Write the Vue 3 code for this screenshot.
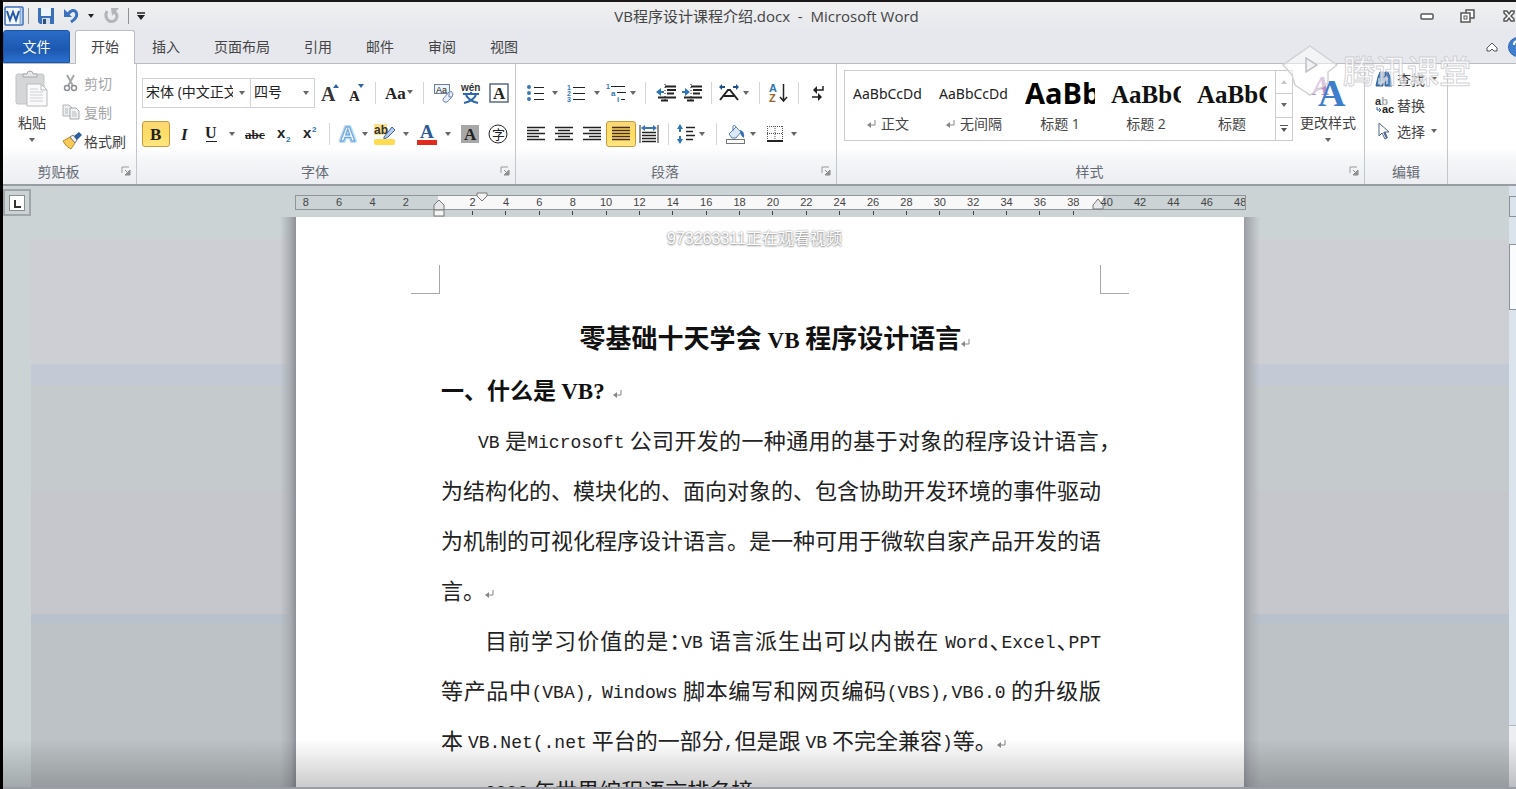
<script setup>
const svg = (w, h, body) =>
  `<svg width="${w}" height="${h}" viewBox="0 0 ${w} ${h}" fill="none" aria-hidden="true">${body}</svg>`

const serif = 'font-family="Liberation Serif, serif" font-weight="bold"'
const sans = 'font-family="Liberation Sans, sans-serif" font-weight="bold"'

const icons = {
  arrow: svg(6, 4, '<path d="M0 0H6L3 4Z" fill="#666"/>'),
  growFont: svg(20, 22, `<text x="1" y="19" font-size="20" ${serif} fill="#333">A</text><path d="M13 6L16 2L19 6Z" fill="#2e62a6"/>`),
  shrinkFont: svg(20, 22, `<text x="3" y="19" font-size="15" ${serif} fill="#222">A</text><path d="M12 2H18L15 6Z" fill="#2e62a6"/>`),
  changeCase: svg(28, 20, `<text x="0" y="16" font-size="17" ${serif} fill="#222">Aa</text><path d="M22 7H28L25 11Z" fill="#666"/>`),
  clearFormat: svg(22, 22, '<rect x="1.500" y="2.500" width="15" height="9" fill="#eef4fb" stroke="#6b7f98"/><text x="3" y="11" font-size="9" font-family="Liberation Sans, sans-serif" fill="#222">Aa</text><path d="M10 17L16 10Q19 8 20 12L19 15L14 20Q10 21 10 17Z" fill="#e8eefb" stroke="#6f86b5"/><path d="M16 10L16 15L19 15" stroke="#6f86b5"/>'),
  phonetic: svg(22, 22, `<text x="1" y="9" font-size="10" ${sans} fill="#333">wén</text><path d="M3 12H19M11 10V12M6 13Q9 19 18 21M16 13Q13 19 4 21" stroke="#2d68ad" stroke-width="2"/>`),
  charBorder: svg(20, 20, `<rect x="1" y="1" width="18" height="18" fill="#fff" stroke="#5a6b82" stroke-width="1.500"/><text x="4" y="16" font-size="17" ${serif} fill="#222">A</text>`),
  bold: svg(16, 20, `<text x="2" y="16" font-size="17" ${serif} fill="#222">B</text>`),
  italic: svg(16, 20, `<text x="5" y="16" font-size="17" ${serif} font-style="italic" fill="#222">I</text>`),
  underline: svg(16, 20, `<text x="2" y="14" font-size="16" ${serif} fill="#222">U</text><path d="M3 17.500H14" stroke="#222"/>`),
  strike: svg(20, 16, `<text x="0" y="13" font-size="13" ${serif} fill="#222">abc</text><path d="M0 9.500H20" stroke="#222"/>`),
  sub: svg(16, 20, `<text x="1" y="14" font-size="15" ${sans} fill="#222">x</text><text x="10" y="18" font-size="8" ${sans} fill="#2e75b6">2</text>`),
  sup: svg(16, 20, `<text x="1" y="14" font-size="15" ${sans} fill="#222">x</text><text x="10" y="8" font-size="8" ${sans} fill="#2e75b6">2</text>`),
  textEffect: svg(22, 22, `<text x="3" y="18" font-size="21" ${sans} fill="#fff" stroke="#b8dcf5" stroke-width="4" stroke-linejoin="round">A</text><text x="3" y="18" font-size="21" ${sans} fill="#fff" stroke="#5a9bd4" stroke-width="1">A</text>`),
  highlight: svg(22, 22, `<rect x="0" y="1" width="13" height="11" fill="#fde08a"/><text x="0" y="11" font-size="12" ${sans} fill="#333">ab</text><path d="M10 14L18 4L21 7L14 14L10 16Z" fill="#b9cdea" stroke="#3a64a5"/><rect x="0" y="16" width="21" height="6" rx="2" fill="#fddc4f"/>`),
  fontColor: svg(20, 22, `<text x="3" y="15" font-size="19" ${serif} fill="#2c5896">A</text><rect x="0" y="17" width="20" height="5" fill="#e02b1d"/>`),
  charShade: svg(18, 18, `<rect width="18" height="18" fill="#a8a8a8"/><text x="3" y="15" font-size="17" ${serif} fill="#222">A</text>`),
  enclose: svg(20, 20, '<circle cx="10" cy="10" r="9" stroke="#222"/><text x="4" y="15" font-size="13" font-family="Noto Sans CJK SC, sans-serif" fill="#222">字</text>'),
  bullets: svg(18, 18, '<circle cx="2" cy="3" r="2" fill="#3c78b8"/><circle cx="2" cy="9" r="2" fill="#3c78b8"/><circle cx="2" cy="15" r="2" fill="#3c78b8"/><path d="M7 3.500H17M7 9.500H17M7 15.500H17" stroke="#222"/>'),
  numbers: svg(18, 18, `<text x="0" y="6" font-size="7" ${sans} fill="#2e75b6">1</text><text x="0" y="12" font-size="7" ${sans} fill="#2e75b6">2</text><text x="0" y="18" font-size="7" ${sans} fill="#2e75b6">3</text><path d="M6 3.500H18M6 9.500H18M6 15.500H18" stroke="#222"/>`),
  multilevel: svg(20, 20, `<text x="0" y="6" font-size="7" ${sans} fill="#2e75b6">1</text><text x="5" y="13" font-size="8" ${sans} fill="#2e75b6">a</text><text x="11" y="19" font-size="8" ${sans} fill="#2e75b6">i</text><path d="M5 3.500H19M11 9.500H20M15 16.500H19" stroke="#222"/>`),
  outdent: svg(20, 18, '<path d="M9 2.500H20M11 6H20M11 9.500H18M2 13.500H20M5 16.500H12" stroke="#222" stroke-width="2"/><path d="M9 0V18" stroke="#222" stroke-dasharray="1 2"/><path d="M0 8L5 4V7H8V9H5V12Z" fill="#2e75b6"/>'),
  indent: svg(20, 18, '<path d="M9 2.500H20M11 6H20M11 9.500H18M2 13.500H20M5 16.500H12" stroke="#222" stroke-width="2"/><path d="M9 0V18" stroke="#222" stroke-dasharray="1 2"/><path d="M8 8L3 4V7H0V9H3V12Z" fill="#2e75b6"/>'),
  asian: svg(20, 18, '<path d="M1 16L9 6H11L19 16M5 12H15" stroke="#222" stroke-width="2"/><path d="M0 3L3 0V2H6V4H3V6ZM20 3L17 0V2H14V4H17V6Z" fill="#1f4e8c"/>'),
  sort: svg(18, 20, `<text x="0" y="9" font-size="11" ${sans} fill="#2e75b6">A</text><text x="0" y="19" font-size="11" ${sans} fill="#9a6427">Z</text><path d="M14.500 1V18M11 14L14.500 18L18 14" stroke="#222" stroke-width="1.500"/>`),
  marks: svg(14, 18, '<path d="M12 2V6H5" stroke="#222" stroke-width="1.500"/><path d="M2 6L6 2V10ZM11 13L7 9V17Z" fill="#222"/><path d="M1 13H8" stroke="#222" stroke-width="1.500"/>'),
  alignLeft: svg(18, 16, '<path d="M0 1.500H18M0 4.500H12M0 7.500H18M0 10.500H12M0 13.500H18" stroke="#222" stroke-width="1.500"/>'),
  alignCenter: svg(18, 16, '<path d="M0 1.500H18M3 4.500H15M0 7.500H18M3 10.500H15M0 13.500H18" stroke="#222" stroke-width="1.500"/>'),
  alignRight: svg(18, 16, '<path d="M0 1.500H18M6 4.500H18M0 7.500H18M6 10.500H18M0 13.500H18" stroke="#222" stroke-width="1.500"/>'),
  justify: svg(18, 16, '<path d="M0 1.500H18M0 4.500H18M0 7.500H18M0 10.500H18M0 13.500H18" stroke="#4a2b18" stroke-width="1.500"/>'),
  distribute: svg(20, 20, '<path d="M1 1V19M19 1V19" stroke="#222"/><path d="M3 8.500H17M3 11.500H17M3 14.500H17M3 17.500H17" stroke="#222" stroke-width="1.500"/><path d="M2 4L6 1V3H14V1L18 4L14 7V5H6V7Z" fill="#3775ba"/>'),
  lineSpacing: svg(18, 20, '<path d="M3 0L6 5H4V8H2V5H0ZM3 20L6 15H4V12H2V15H0Z" fill="#2e75b6"/><path d="M9 3.500H18M9 7.500H16M9 11.500H18M9 15.500H16" stroke="#222" stroke-width="1.500"/>'),
  shading: svg(22, 20, '<path d="M4 10L11 3L16 8L11 14H7Z" fill="#dbe8f6" stroke="#5b7fae"/><path d="M8 7V2Q10 0 11 3" stroke="#5b7fae"/><path d="M15 6Q20 7 19 14Q16 12 15 9Z" fill="#3571b4"/><rect x="1.500" y="15.500" width="18" height="4" fill="#fff" stroke="#777"/>'),
  borders: svg(16, 18, '<path d="M.5 1V16M8 1V16M15.500 1V16M0 1.500H16M0 8.500H16" stroke="#555" stroke-dasharray="1 1"/><path d="M0 16H16" stroke="#222" stroke-width="2"/>'),
  paste: svg(34, 38, '<rect x="1" y="4" width="28" height="30" rx="2" fill="#d4d6d8" stroke="#c0c3c5"/><path d="M8 7V4H12Q12 1 15 1Q18 1 18 4H22V7Z" fill="#e6e8e9" stroke="#a5a9ac"/><path d="M12 14H26L32 20V36H12Z" fill="#fafafa" stroke="#b8bbbe"/><path d="M26 14V20H32" stroke="#b8bbbe"/><path d="M15 19H23M15 22H28M15 25H28M15 28H28M15 31H28" stroke="#cdd0d3"/>'),
  cut: svg(18, 18, '<path d="M5 1L11 12M12 1L6 12" stroke="#a5a8ab" stroke-width="2"/><circle cx="5" cy="14" r="2.500" stroke="#8c9094" stroke-width="1.500"/><circle cx="12" cy="14" r="2.500" stroke="#8c9094" stroke-width="1.500"/>'),
  copy: svg(18, 18, '<path d="M1 2H7L10 5V13H1Z" fill="#eceeef" stroke="#b0b4b7"/><path d="M8 5H14L17 8V16H8Z" fill="#f2f3f4" stroke="#a3a8ab"/><path d="M10 9H14M10 11H15M10 13H15M3 6H6M3 8H6M3 10H6" stroke="#b6babd"/>'),
  painter: svg(20, 18, '<path d="M1 9L8 5L13 11L9 17Q4 15 1 9Z" fill="#f6cb5a" stroke="#b98a26"/><path d="M8 5L11 3L15 8L13 11Z" fill="#f3f3f3" stroke="#777"/><path d="M12 4L17 0L20 3L15 8Z" fill="#2d5f9e"/>'),
  styles: svg(36, 38, `<text x="2" y="25" font-size="27" ${serif} font-style="italic" fill="#b98fc4">A</text><text x="8" y="36" font-size="38" ${serif} fill="#3f7ecb">A</text>`),
  find: svg(18, 18, '<path d="M1 16L3 7L5 2H8V16ZM17 16L15 7L13 2H10V16Z" fill="#4f80ba" stroke="#2c5b94"/><path d="M7 6H11V11H7Z" fill="#2c5b94"/><path d="M4 8V14M12 8V14" stroke="#c3d7ec" stroke-width="1.500"/>'),
  replace: svg(20, 18, `<text x="0" y="9" font-size="11" ${sans} fill="#333">a<tspan fill="#aaa">b</tspan></text><text x="7" y="17" font-size="11" ${sans} fill="#222">ac</text><path d="M2 11V14H6M4 12L6 14L4 16" stroke="#2e62a6"/>`),
  select: svg(18, 18, '<path d="M4 1V14L7 11L10 17L12 16L10 10H14Z" fill="#fff" stroke="#50698c"/><path d="M9 10L12 16" stroke="#50698c" stroke-width="2"/>'),
  launcher: svg(10, 10, '<path d="M1 7V1H8" stroke="#999"/><path d="M4 4L8 8M9 4V9H4Z" stroke="#888" fill="#999"/>'),
  returnMark: svg(9, 9, '<path d="M8 0V5H1" stroke="#888"/><path d="M0 5L4 2V8Z" fill="#888"/>'),
}

const tabs = ['开始', '插入', '页面布局', '引用', '邮件', '审阅', '视图']

const t = (icon, w, label, on = false) => ({ icon, w, label, on })
const sep = (w) => ({ sep: true, w })

const fontRow1 = [
  t('growFont', 29, '增大字体'), t('shrinkFont', 24, '缩小字体'), sep(14),
  t('changeCase', 34, '更改大小写'), sep(14),
  t('clearFormat', 27, '清除格式'), t('phonetic', 28, '拼音指南'), t('charBorder', 27, '字符边框'),
]
const fontRow2 = [
  t('bold', 28, '加粗', true), t('italic', 27, '倾斜'), t('underline', 28, '下划线'), t('arrow', 14, '下划线选项'),
  t('strike', 32, '删除线'), t('sub', 26, '下标'), t('sup', 26, '上标'), sep(12),
  t('textEffect', 26, '文本效果'), t('arrow', 8, '文本效果选项'),
  t('highlight', 32, '突出显示'), t('arrow', 10, '突出显示选项'),
  t('fontColor', 32, '字体颜色'), t('arrow', 10, '字体颜色选项'),
  t('charShade', 34, '字符底纹'), t('enclose', 22, '带圈字符'),
]
const paraRow1 = [
  t('bullets', 28, '项目符号'), t('arrow', 10, '项目符号选项'),
  t('numbers', 32, '编号'), t('arrow', 10, '编号选项'),
  t('multilevel', 28, '多级列表'), t('arrow', 6, '多级列表选项'), sep(18),
  t('outdent', 24, '减少缩进量'), t('indent', 28, '增加缩进量'), sep(10),
  t('asian', 26, '中文版式'), t('arrow', 8, '中文版式选项'), sep(18),
  t('sort', 20, '排序'), sep(20), t('marks', 20, '显示编辑标记'),
]
const paraRow2 = [
  t('alignLeft', 28, '左对齐'), t('alignCenter', 28, '居中'), t('alignRight', 28, '右对齐'),
  t('justify', 30, '两端对齐', true), t('distribute', 26, '分散对齐'), sep(12),
  t('lineSpacing', 24, '行距'), t('arrow', 8, '行距选项'), sep(20),
  t('shading', 20, '底纹'), t('arrow', 14, '底纹选项'),
  t('borders', 30, '边框'), t('arrow', 8, '边框选项'),
]

const styleItems = [
  { sample: 'AaBbCcDd', name: '正文', kind: 'plain', mark: true },
  { sample: 'AaBbCcDd', name: '无间隔', kind: 'plain', mark: true },
  { sample: 'AaBb', name: '标题 1', kind: 'h1' },
  { sample: 'AaBbC', name: '标题 2', kind: 'h2' },
  { sample: 'AaBbC', name: '标题', kind: 'h2' },
]

const ruler = Array.from({ length: 29 }, (_, i) => {
  const n = (i - 4) * 2
  return { label: n === 0 ? '' : String(Math.abs(n)), tick: n > 0 && n < 40 }
})

const runs = (text) =>
  text
    .split(/([A-Za-z0-9().,]+)/)
    .filter(Boolean)
    .map((s) => ({ s, latin: /^[A-Za-z0-9().,]/.test(s) }))

const lines = [
  { text: 'VB 是Microsoft 公司开发的一种通用的基于对象的程序设计语言，', cls: 'full hang tight' },
  { text: '为结构化的、模块化的、面向对象的、包含协助开发环境的事件驱动', cls: 'full' },
  { text: '为机制的可视化程序设计语言。是一种可用于微软自家产品开发的语', cls: 'full' },
  { text: '言。', cls: '', mark: true },
  { text: '目前学习价值的是：VB 语言派生出可以内嵌在 Word、Excel、PPT', cls: 'full first tight' },
  { text: '等产品中(VBA), Windows 脚本编写和网页编码(VBS),VB6.0 的升级版', cls: 'full' },
  { text: '本 VB.Net(.net 平台的一部分,但是跟 VB 不完全兼容)等。', cls: '', mark: true },
  { text: '2009 年世界编程语言排名榜', cls: 'first' },
].map((l) => ({ ...l, runs: runs(l.text) }))
</script>

<template>
  <div class="window">
    <header class="titlebar">
      <div class="quick">
        <svg class="logo" width="20" height="20" viewBox="0 0 20 20" aria-hidden="true">
          <rect x="1" y="1" width="18" height="18" rx="1" fill="#f4f8fd" stroke="#3b6cb4" stroke-width="1.500" />
          <path d="M16.500 2V18" stroke="#8caedb" stroke-width="2" />
          <path d="M3 5L6 14L9 6L12 14L15 5" fill="none" stroke="#2359ab" stroke-width="2" />
        </svg>
        <i class="bar"></i>
        <button aria-label="保存">
          <svg width="18" height="18" viewBox="0 0 18 18"><path d="M1 1H17V17H3L1 15Z" fill="#3b6fb8" /><rect x="4" y="1" width="10" height="8" fill="#eef4fb" /><rect x="5" y="11" width="8" height="6" fill="#d4dfee" /><rect x="6" y="12" width="3" height="5" fill="#2c4f83" /></svg>
        </button>
        <button class="undo" aria-label="撤消">
          <svg width="16" height="16" viewBox="0 0 16 16"><path d="M4 6Q9 0 12 4Q15 9 7 14" fill="none" stroke="#3a72c0" stroke-width="3" /><path d="M0 1V9H8Z" fill="#3a72c0" /></svg>
        </button>
        <button aria-label="撤消选项"><svg width="6" height="4" viewBox="0 0 6 4"><path d="M0 0H6L3 4Z" fill="#222" /></svg></button>
        <button class="redo" aria-label="重复">
          <svg width="16" height="16" viewBox="0 0 16 16"><path d="M3 3Q0 9 5 13Q11 15 13 9Q13 5 10 4" fill="none" stroke="#b3b5b8" stroke-width="3" /><path d="M7 0H15L8 8Z" fill="#b3b5b8" /></svg>
        </button>
        <i class="bar"></i>
        <button aria-label="自定义快速访问工具栏"><svg width="8" height="8" viewBox="0 0 8 8"><path d="M0 1H8" stroke="#222" stroke-width="1.500" /><path d="M0 3H8L4 8Z" fill="#222" /></svg></button>
      </div>
      <h1 class="caption">VB程序设计课程介绍.docx&nbsp; -&nbsp; Microsoft Word</h1>
      <div class="sysbuttons">
        <button aria-label="最小化"><svg width="14" height="14" viewBox="0 0 14 14"><rect x="1" y="5" width="12" height="5" rx="1" fill="#fff" stroke="#555" stroke-width="1.500" /></svg></button>
        <button aria-label="还原"><svg width="16" height="14" viewBox="0 0 16 14"><rect x="6" y="1" width="8" height="8" fill="#fff" stroke="#555" stroke-width="1.500" /><rect x="1" y="4" width="9" height="9" fill="#fff" stroke="#555" stroke-width="1.500" /><rect x="4" y="7" width="3" height="3" fill="none" stroke="#555" /></svg></button>
        <button aria-label="关闭"><svg width="14" height="12" viewBox="0 0 14 12"><path d="M2 1H5L7 4L9 1H12V3L9 6L12 9V11H9L7 8L5 11H2V9L5 6L2 3Z" fill="#fff" stroke="#555" stroke-width="1.500" /></svg></button>
      </div>
    </header>

    <nav class="tabs">
      <button class="file">文件</button>
      <button v-for="(tab, i) in tabs" :key="tab" class="tab" :class="{ active: i === 0 }">{{ tab }}</button>
      <div class="help">
        <button aria-label="功能区最小化"><svg width="12" height="10" viewBox="0 0 12 10"><path d="M1 6L6 1L11 6V9H8L6 7L4 9H1Z" fill="#fff" stroke="#555" /></svg></button>
        <button aria-label="帮助"><svg width="20" height="20" viewBox="0 0 20 20"><circle cx="10" cy="10" r="9.500" fill="#3f7fd0" stroke="#2c62ab" /><path d="M6 8Q6 4 10 4Q14 4 14 8Q14 10 10 11V13" fill="none" stroke="#fff" stroke-width="2" /></svg></button>
      </div>
    </nav>

    <section class="ribbon">
      <div class="group clipboard">
        <div class="body">
          <button class="big" disabled>
            <span v-html="icons.paste"></span>
            <span class="dark">粘贴</span>
            <span v-html="icons.arrow"></span>
          </button>
          <div class="stack">
            <button disabled><span class="ic" v-html="icons.cut"></span>剪切</button>
            <button disabled><span class="ic" v-html="icons.copy"></span>复制</button>
            <button><span class="ic" v-html="icons.painter"></span>格式刷</button>
          </div>
        </div>
        <footer><span>剪贴板</span><button aria-label="剪贴板选项" v-html="icons.launcher"></button></footer>
      </div>

      <div class="group font">
        <div class="body rows">
          <div class="row">
            <label class="combo family"><select aria-label="字体"><option>宋体 (中文正文)</option></select><span v-html="icons.arrow"></span></label>
            <label class="combo size"><select aria-label="字号"><option>四号</option></select><span v-html="icons.arrow"></span></label>
            <template v-for="(b, i) in fontRow1" :key="i">
              <i v-if="b.sep" class="sep" :style="{ width: b.w + 'px' }"></i>
              <button v-else class="tool" :aria-label="b.label" :style="{ width: b.w + 'px' }" v-html="icons[b.icon]"></button>
            </template>
          </div>
          <div class="row">
            <template v-for="(b, i) in fontRow2" :key="i">
              <i v-if="b.sep" class="sep" :style="{ width: b.w + 'px' }"></i>
              <button v-else class="tool" :class="{ on: b.on }" :aria-label="b.label" :style="{ width: b.w + 'px' }" v-html="icons[b.icon]"></button>
            </template>
          </div>
        </div>
        <footer><span>字体</span><button aria-label="字体选项" v-html="icons.launcher"></button></footer>
      </div>

      <div class="group paragraph">
        <div class="body rows">
          <div v-for="(row, r) in [paraRow1, paraRow2]" :key="r" class="row">
            <template v-for="(b, i) in row" :key="i">
              <i v-if="b.sep" class="sep" :style="{ width: b.w + 'px' }"></i>
              <button v-else class="tool" :class="{ on: b.on }" :aria-label="b.label" :style="{ width: b.w + 'px' }" v-html="icons[b.icon]"></button>
            </template>
          </div>
        </div>
        <footer><span>段落</span><button aria-label="段落选项" v-html="icons.launcher"></button></footer>
      </div>

      <div class="group styles">
        <div class="body">
          <div class="gallery">
            <button v-for="(s, i) in styleItems" :key="i" class="style">
              <span class="sample" :class="s.kind">{{ s.sample }}</span>
              <span class="name"><span v-if="s.mark" v-html="icons.returnMark"></span>{{ s.name }}</span>
            </button>
            <div class="scroller">
              <button aria-label="上一行"><svg width="6" height="4" viewBox="0 0 6 4"><path d="M0 4H6L3 0Z" fill="#c4c6c8" /></svg></button>
              <button aria-label="下一行" v-html="icons.arrow"></button>
              <button aria-label="其他"><svg width="8" height="8" viewBox="0 0 8 8"><path d="M0 .5H8" stroke="#555" /><path d="M1 3H7L4 7Z" fill="#555" /></svg></button>
            </div>
          </div>
          <button class="big change">
            <span v-html="icons.styles"></span>
            <span class="dark">更改样式</span>
            <span v-html="icons.arrow"></span>
          </button>
        </div>
        <footer><span>样式</span><button aria-label="样式选项" v-html="icons.launcher"></button></footer>
      </div>

      <div class="group edit">
        <div class="body stack">
          <button><span class="ic" v-html="icons.find"></span>查找<span class="drop" v-html="icons.arrow"></span></button>
          <button><span class="ic" v-html="icons.replace"></span>替换</button>
          <button><span class="ic" v-html="icons.select"></span>选择<span class="drop" v-html="icons.arrow"></span></button>
        </div>
        <footer><span>编辑</span></footer>
      </div>
    </section>

    <main class="workspace">
      <div class="gutter">
        <button class="tabstop" aria-label="制表符"><svg width="16" height="16" viewBox="0 0 16 16"><rect x=".5" y=".5" width="15" height="15" fill="#fff" stroke="#8a8f94" /><path d="M6 5V12H12" fill="none" stroke="#333" stroke-width="2" /></svg></button>
      </div>

      <div class="desk">
        <div class="rulerrow">
          <div class="ruler">
            <svg class="marker right-in" width="12" height="12" viewBox="0 0 12 12"><path d="M1 11V7L6 1L11 7V11Z" fill="#e6e8ea" stroke="#777" /></svg>
            <div class="scale">
              <span v-for="(n, i) in ruler" :key="i" :class="{ tick: n.tick }">{{ n.label }}</span>
            </div>
            <svg class="marker first-line" width="12" height="10" viewBox="0 0 12 10"><path d="M1 1H11V4L6 9L1 4Z" fill="#f4f4f4" stroke="#777" /></svg>
            <svg class="marker hanging" width="12" height="18" viewBox="0 0 12 18"><path d="M1 11V6L6 1L11 6V11Z" fill="#e6e8ea" stroke="#777" /><rect x="1" y="11" width="10" height="6" fill="#f4f4f4" stroke="#777" /></svg>
          </div>
        </div>

        <div class="canvas">
          <article class="page">
            <div class="corners"><i class="corner left"></i><i class="corner right"></i></div>
            <div class="text">
              <h2 class="title">零基础十天学会 <b>VB</b> 程序设计语言<span class="ret" v-html="icons.returnMark"></span></h2>
              <h3 class="heading">一、什么是 <b>VB?</b><span class="ret wide" v-html="icons.returnMark"></span></h3>
              <p v-for="(l, i) in lines" :key="i" class="line" :class="l.cls"><span v-for="(r, j) in l.runs" :key="j" :class="{ latin: r.latin }">{{ r.s }}</span><span v-if="l.mark" class="ret" v-html="icons.returnMark"></span></p>
            </div>
            <div class="viewer">973263311正在观看视频</div>
          </article>
        </div>
      </div>

      <div class="scrollbar">
        <div class="split"></div>
        <div class="up"></div>
        <div class="thumb"></div>
        <div class="track"></div>
        <div class="browse"></div>
      </div>
      <div class="shade"></div>
    </main>

    <div class="watermark">
      <svg width="56" height="52" viewBox="0 0 56 52" aria-hidden="true">
        <path d="M28 1L55 20L46 27V38L28 50L13 40L10 30L1 20Z" fill="#fff" fill-opacity=".5" stroke="#d2d2d6" stroke-width="1.500" />
        <path d="M24 13L35 20L24 27Z" fill="#f2f2f4" stroke="#bfc1c6" stroke-width="1.500" />
      </svg>
      <span>腾讯课堂</span>
    </div>
  </div>
</template>

<style>
body {
  margin: 0;
  overflow: hidden;
}
</style>

<style scoped>
.window {
  position: relative;
  box-sizing: border-box;
  height: 100vh;
  display: flex;
  flex-direction: column;
  overflow: hidden;
  border-top: 2px solid #1b1919;
  border-left: 3px solid #000;
  background: #e6e8ed;
  font-family: "Open Sans", "Noto Sans CJK SC", sans-serif;
  font-size: 14px;
  color: #444;
}
.window :deep(svg) {
  display: block;
  flex: none;
  overflow: visible;
}
button {
  display: flex;
  align-items: center;
  justify-content: center;
  padding: 0;
  border: 0;
  background: none;
  font: inherit;
  color: inherit;
  white-space: nowrap;
}
i {
  display: block;
  flex: none;
}

/* title bar */
.titlebar {
  flex: none;
  display: grid;
  grid-template-columns: 1fr auto 1fr;
  align-items: center;
  height: 28px;
  background: linear-gradient(#f0f0f0, #e6e8ed);
}
.quick {
  display: flex;
  align-items: center;
  gap: 8px;
  padding-left: 1px;
}
.quick .bar {
  width: 1px;
  height: 16px;
  margin-left: -4px;
  background: #8e9196;
}
.undo {
  margin-left: 1px;
}
.redo {
  margin-left: 2px;
  margin-right: 4px;
}
.caption {
  margin: 0;
  padding-left: 14px;
  font-size: 15px;
  font-weight: 400;
  line-height: 24px;
}
.sysbuttons {
  display: flex;
  justify-content: flex-end;
  gap: 26px;
}

/* tabs */
.tabs {
  flex: none;
  display: flex;
  align-items: flex-end;
  height: 34px;
  box-sizing: border-box;
  border-bottom: 1px solid #b9bcc1;
}
.file {
  width: 67px;
  height: 33px;
  margin-right: 5px;
  padding-bottom: 2px;
  border: 1px solid #1a56a8;
  border-radius: 3px 3px 0 0;
  background: linear-gradient(#2a6cc8, #1c58b0 60%, #2b71cf);
  color: #fff;
}
.tab {
  height: 33px;
  padding: 0 17px 2px;
}
.tab.active {
  height: 34px;
  padding: 0 15px 4px;
  margin: 0 0 -1px;
  border: 1px solid #b9bcc1;
  border-bottom: 0;
  border-radius: 3px 3px 0 0;
  background: #fff;
}
.help {
  display: flex;
  align-items: center;
  gap: 10px;
  height: 33px;
  margin-left: auto;
  margin-right: -12px;
}

/* ribbon */
.ribbon {
  flex: none;
  display: flex;
  height: 120px;
  background: linear-gradient(#fff 70%, #f5f6f8 80%, #eceef2);
  border-bottom: 2px solid #979da2;
}
.group {
  flex: none;
  display: flex;
  flex-direction: column;
  box-sizing: border-box;
  border-right: 1px solid #c3c6ca;
}
.clipboard { width: 134px; }
.font { width: 379px; }
.paragraph { width: 321px; }
.styles { width: 528px; }
.edit { width: 83px; }
.body {
  display: flex;
  height: 96px;
}
.group footer {
  position: relative;
  display: flex;
  justify-content: center;
  line-height: 23px;
  color: #666b73;
}
.group footer span {
  margin-right: 22px;
}
.edit footer span {
  margin-right: 0;
}
.group footer button {
  position: absolute;
  right: 5px;
  top: 6px;
}
.big {
  flex-direction: column;
  justify-content: flex-start;
  gap: 5px;
  width: 44px;
  margin-left: 7px;
  padding-top: 6px;
  line-height: 20px;
}
.dark {
  color: #444;
}
.stack {
  display: flex;
  flex-direction: column;
  justify-content: flex-start;
}
.clipboard .stack {
  padding: 4px 0 0 8px;
}
.stack button {
  justify-content: flex-start;
  height: 29px;
}
.stack button:disabled {
  color: #a2a4a7;
}
.stack .ic {
  width: 22px;
}
.edit .stack {
  box-sizing: border-box;
  padding: 2px 0 0 10px;
}
.edit .stack button {
  height: 26px;
}
.drop {
  margin-left: 6px;
}
.rows {
  flex-direction: column;
  gap: 11px;
  box-sizing: border-box;
  padding: 14px 0 0 5px;
}
.paragraph .rows {
  padding-left: 6px;
}
.row {
  display: flex;
  align-items: center;
  height: 30px;
}
.tool {
  flex: none;
  height: 26px;
}
.tool.on {
  box-sizing: border-box;
  border: 1px solid #c39a3e;
  border-radius: 3px;
  background: linear-gradient(#fbd874, #ffdd66 50%, #ffe680);
}
.sep {
  height: 22px;
  background: linear-gradient(#d3d5d8, #d3d5d8) center / 1px 100% no-repeat;
}
.combo {
  position: relative;
  box-sizing: border-box;
  height: 30px;
  border: 1px solid #cfd2d6;
  background: #fff;
}
.family { width: 109px; }
.size {
  width: 64px;
  border-left: 0;
}
.combo select {
  box-sizing: border-box;
  width: 100%;
  height: 100%;
  padding: 0 17px 4px 3px;
  border: 0;
  outline: 0;
  appearance: none;
  background: none;
  font: inherit;
  color: #222;
}
.combo span {
  position: absolute;
  right: 5px;
  top: 12px;
}

/* style gallery */
.gallery {
  display: flex;
  box-sizing: border-box;
  height: 71px;
  margin: 6px 0 0 7px;
  border: 1px solid #c9ccd0;
  background: #fff;
}
.style {
  flex-direction: column;
  width: 86px;
  padding: 0 8px;
  justify-content: flex-start;
}
.sample {
  display: block;
  width: 70px;
  height: 42px;
  line-height: 46px;
  overflow: hidden;
  text-align: left;
  color: #222;
}
.sample.plain {
  font-size: 14px;
  font-family: "Noto Sans", sans-serif;
}
.sample.h1 {
  font: bold 29px/44px "Open Sans", sans-serif;
  color: #000;
}
.sample.h2 {
  font: bold 25px/48px "Liberation Serif", serif;
  color: #111;
}
.name {
  display: flex;
  align-items: center;
  gap: 5px;
  line-height: 22px;
}
.scroller {
  display: flex;
  flex-direction: column;
  width: 17px;
}
.scroller button {
  flex: 1;
  border-left: 1px solid #c9ccd0;
  border-bottom: 1px solid #c9ccd0;
}
.scroller button:last-child {
  border-bottom: 0;
}
.change {
  width: 70px;
  margin-left: 0;
}

/* workspace */
.workspace {
  position: relative;
  flex: 1;
  display: flex;
  min-height: 0;
  background: #cbd3d5;
  border-bottom: 2px solid #9a9da5;
}
.gutter {
  flex: none;
  width: 28px;
}
.tabstop {
  box-sizing: border-box;
  width: 28px;
  height: 27px;
  margin-top: 3px;
  border: 2px solid #a1a6aa;
}
.desk {
  flex: 1;
  display: flex;
  flex-direction: column;
  min-width: 0;
  background: linear-gradient(
    #cbd3d5 53px,
    #cecfd4 53px 178px,
    #c3cad5 178px 200px,
    #c5cacd 200px 305px,
    #c6c7cc 305px 428px,
    #b9c1cc 428px 438px,
    #bcc2c5 438px
  );
}
.rulerrow {
  flex: none;
  display: flex;
  justify-content: center;
  height: 31px;
}
.ruler {
  position: relative;
  box-sizing: border-box;
  width: 951px;
  height: 15px;
  margin: 9px 0 0 1px;
  border: 1px solid #8f959a;
  background: linear-gradient(90deg, #cbd3d5 15%, #f8f8f8 15% 85%, #cbd3d5 85%);
}
.scale {
  position: relative;
  display: flex;
  height: 21px;
  clip-path: inset(0 12px 0 7px);
  margin: 0 -12px 0 -7px;
}
.scale span {
  flex: 1;
  min-width: 0;
  text-align: center;
  font: 11px/13px "Liberation Sans", sans-serif;
  color: #444;
}
.scale .tick::after {
  content: "";
  display: block;
  width: 1px;
  height: 4px;
  margin: 2px auto 0;
  background: #444;
}
.marker {
  position: absolute;
}
.first-line { left: 19%; top: -4px; }
.hanging { left: 137px; top: 3px; }
.right-in { right: 141px; top: 2px; }

.canvas {
  flex: 1;
  display: flex;
  justify-content: center;
  min-height: 0;
  overflow: hidden;
}
.page {
  position: relative;
  width: 948px;
  background: #fff;
}
.page::before,
.page::after {
  content: "";
  position: absolute;
  top: 0;
  bottom: 0;
  width: 16px;
}
.page::before {
  right: 100%;
  background: linear-gradient(270deg, #8d9197, #a9adb2 35%, #c3c8cc00);
}
.page::after {
  left: 100%;
  background: linear-gradient(90deg, #9a9ea4, #adb1b6 35%, #c3c8cc00);
}
.corners {
  display: flex;
  justify-content: space-between;
  padding: 48px 115px 0;
}
.corner {
  width: 28px;
  height: 28px;
  border-bottom: 1px solid #a8a8a8;
}
.corner.left { border-right: 1px solid #a8a8a8; }
.corner.right { border-left: 1px solid #a8a8a8; }
.text {
  padding: 18px 143px 0 145px;
  font-family: "Noto Sans CJK SC", sans-serif;
  font-size: 22px;
  line-height: 50px;
  color: #222;
  white-space: nowrap;
}
.title {
  height: 50px;
  margin: 0;
  padding-left: 8px;
  text-align: center;
  font-size: 26px;
  line-height: 50px;
  color: #111;
}
.heading {
  height: 50px;
  margin: 2px 0 0;
  font-size: 23px;
  line-height: 50px;
  color: #111;
}
.title b,
.heading b {
  font-family: "Liberation Serif", serif;
  font-size: 23px;
  line-height: 1;
}
.line {
  height: 50px;
  margin: 0;
}
.latin {
  font-family: "Liberation Mono", monospace;
  font-size: 18px;
  line-height: 1;
  vertical-align: 1px;
}
.full { text-align-last: justify; }
.tight { font-feature-settings: "halt"; }
.first { padding-left: 44px; }
.hang {
  padding-left: 37px;
  margin-right: -9px;
}
.ret {
  display: inline-block;
  line-height: 1;
}
.ret.wide {
  margin-left: 8px;
}
.viewer {
  position: absolute;
  left: 371px;
  top: 11px;
  font: 16px/22px "Liberation Sans", "Noto Sans CJK SC", sans-serif;
  color: #fff;
  text-shadow: 0 0 2px #888, 0 1px 2px #999;
}

/* scroll bar */
.scrollbar {
  flex: none;
  display: flex;
  flex-direction: column;
  box-sizing: border-box;
  width: 7px;
  background: #dbe3ed;
}
.split {
  box-sizing: border-box;
  height: 21px;
  margin-top: 10px;
  border: 1px solid #8d9299;
  border-right: 0;
}
.up { height: 27px; }
.thumb {
  box-sizing: border-box;
  height: 66px;
  border: 1px solid #8d9299;
  border-right: 0;
  background: #fafbfc;
}
.track { flex: 1; }
.browse {
  height: 61px;
  border-top: 1px solid #b4b8be;
  background: #eceef2;
}
.shade {
  position: absolute;
  left: 0;
  right: 0;
  bottom: 0;
  height: 48px;
  background: linear-gradient(#0000, #0003);
  pointer-events: none;
}

/* broadcaster logo */
.watermark {
  position: absolute;
  right: 45px;
  top: 43px;
  display: flex;
  align-items: center;
  gap: 5px;
  font-size: 32px;
  line-height: 52px;
  font-weight: 500;
  color: #ffffffb0;
  -webkit-text-stroke: 1px #c4c5c9c0;
  pointer-events: none;
}
</style>
